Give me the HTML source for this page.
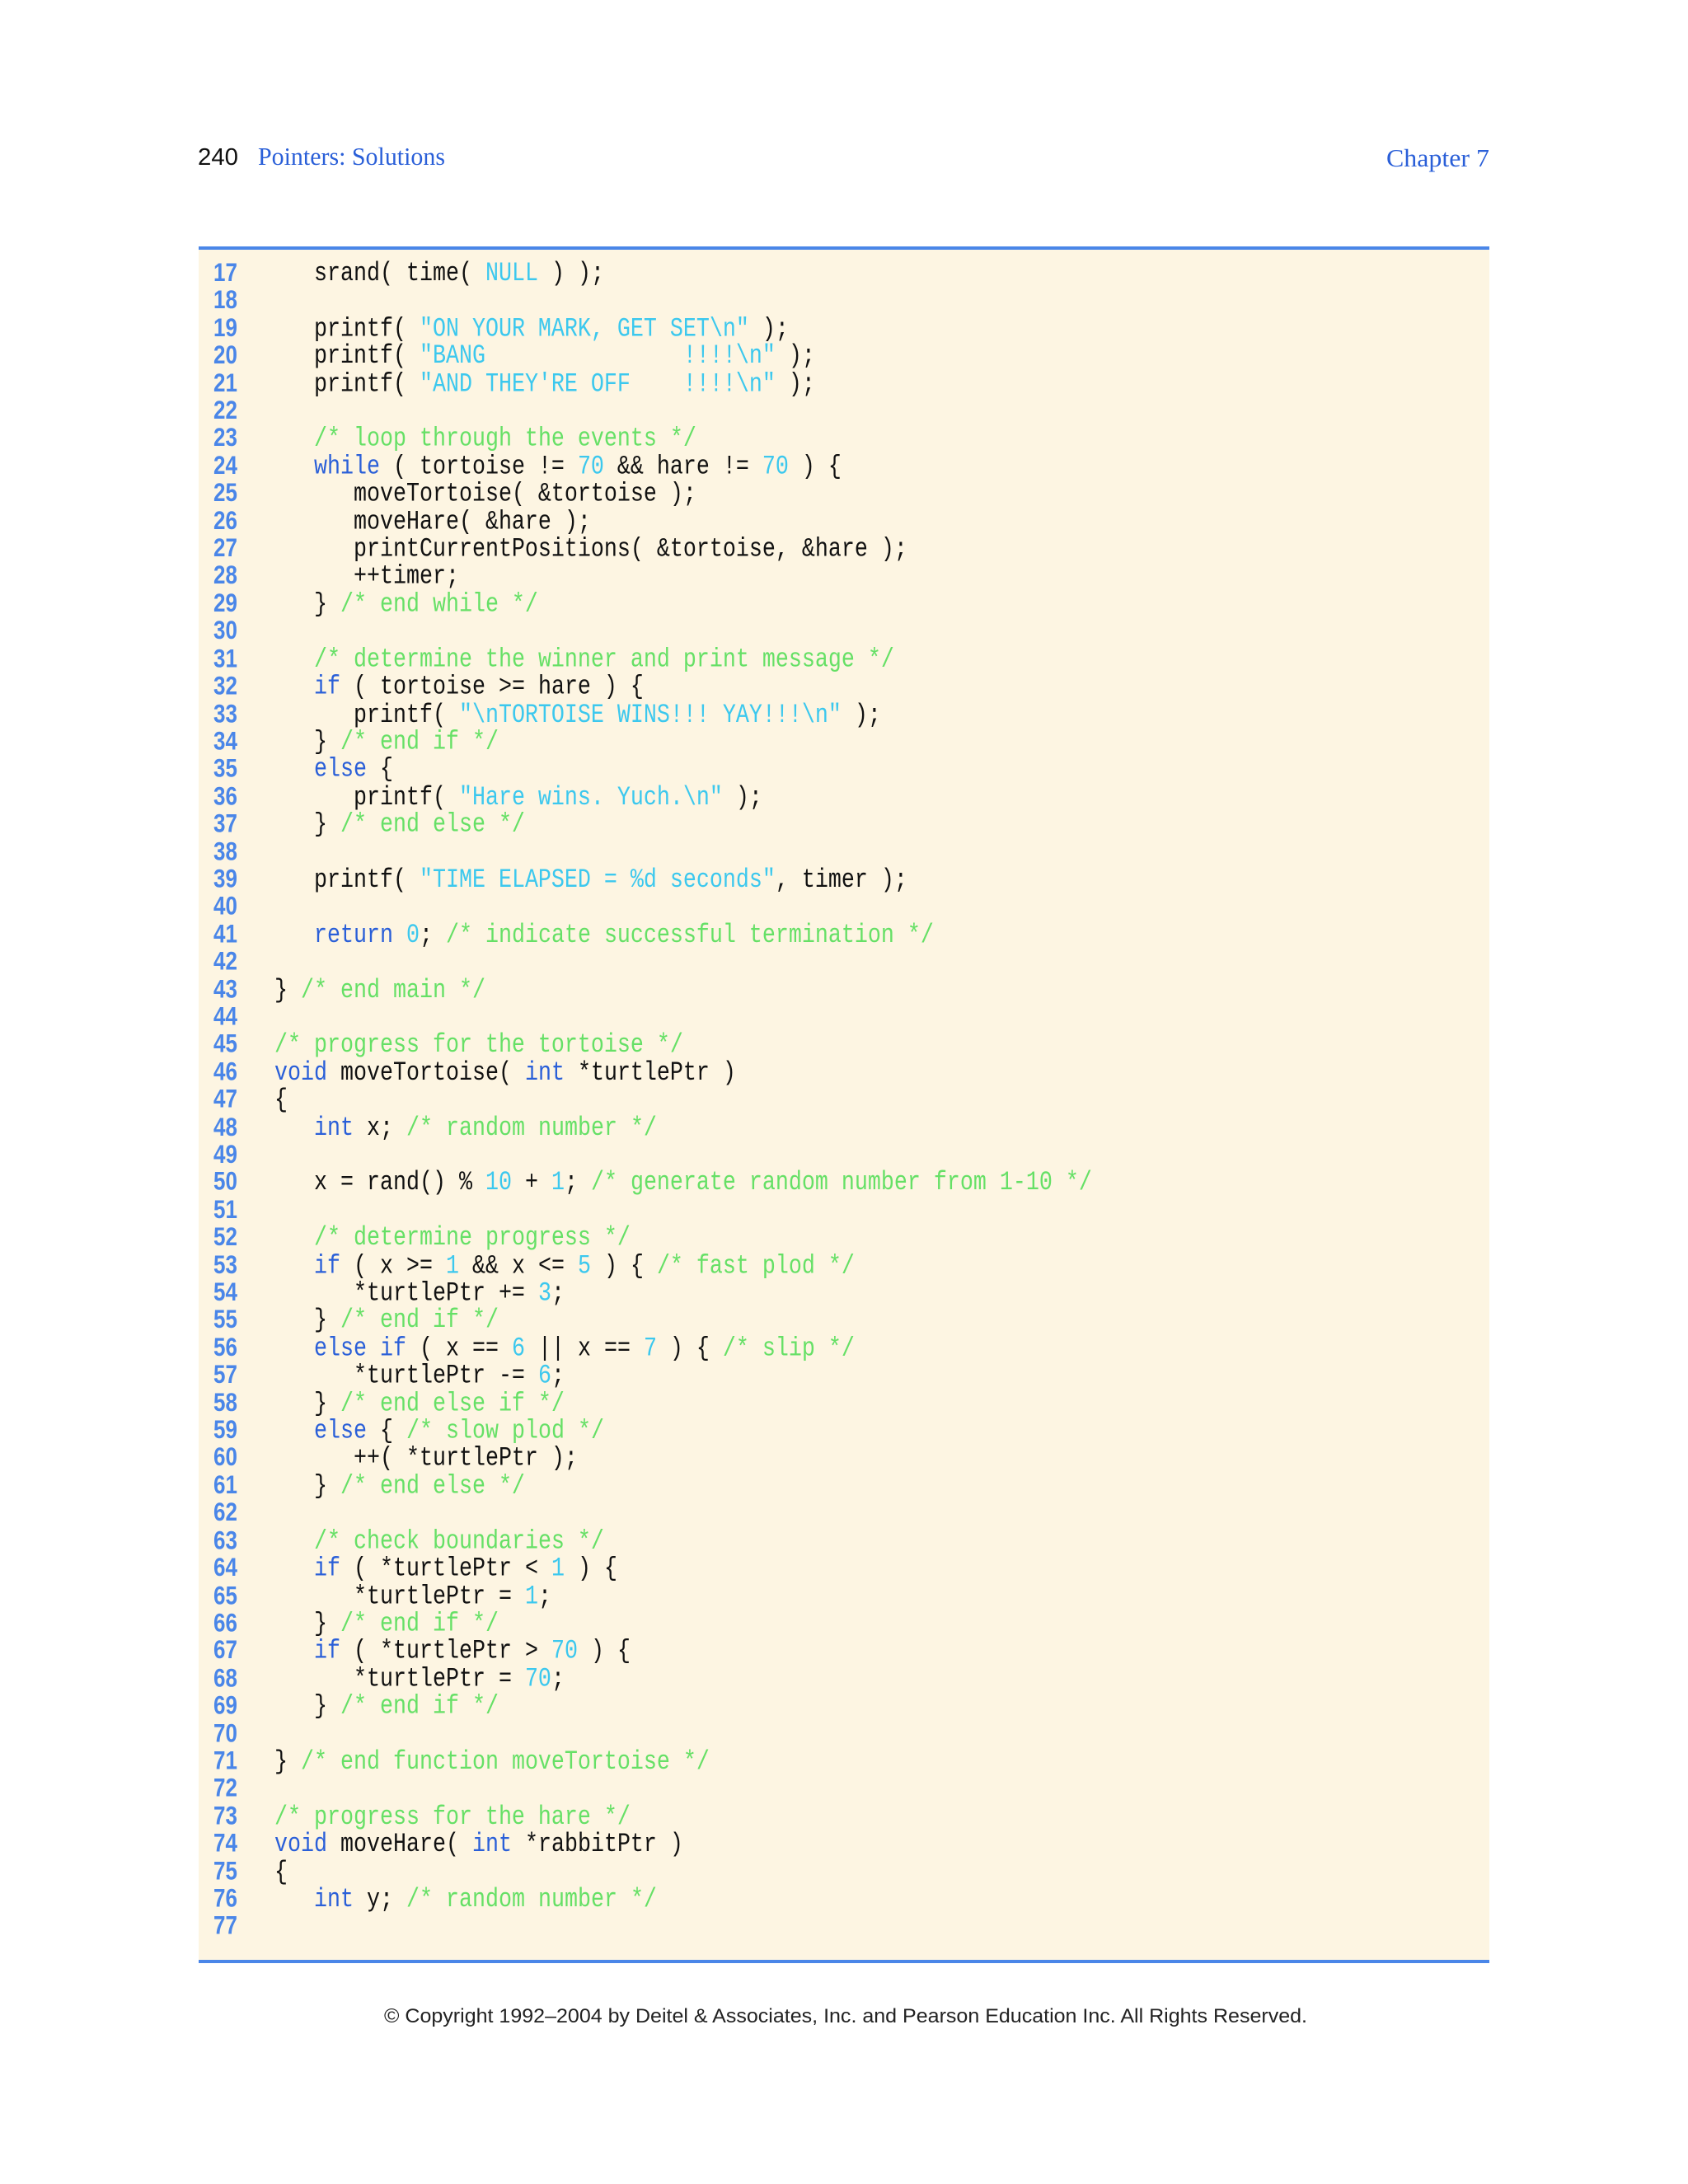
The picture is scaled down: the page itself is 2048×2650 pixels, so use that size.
<!DOCTYPE html>
<html><head><meta charset="utf-8">
<style>
html,body{margin:0;padding:0;background:#fff;}
body{width:2048px;height:2650px;position:relative;overflow:hidden;}
.box{position:absolute;left:241px;top:299px;width:1566px;height:2083px;background:#fdf5e2;border-top:4px solid #4a86e8;border-bottom:4px solid #4a86e8;box-sizing:border-box;}
pre{margin:0;position:absolute;transform:scaleY(1.22);transform-origin:0 0;line-height:27.4px;}
.code{left:333px;top:316.6px;font-family:"Liberation Mono",monospace;font-size:26.67px;color:#111;}
.ln{left:259px;top:314.3px;font-family:"Liberation Sans",sans-serif;font-weight:bold;font-size:26px;color:#4a86e8;}
.k{color:#2a5fd8}.n{color:#3cc8ee}.c{color:#66e066}
svg{position:absolute;left:0;top:0}
</style></head><body>
<div class="box"></div>
<svg width="2048" height="2650">
<text x="240" y="200" font-family="Liberation Sans" font-size="29" fill="#111" textLength="49" lengthAdjust="spacingAndGlyphs">240</text>
<text x="313" y="200" font-family="Liberation Serif" font-size="31" fill="#2a5fd8" textLength="227" lengthAdjust="spacingAndGlyphs">Pointers: Solutions</text>
<text x="1682" y="202" font-family="Liberation Serif" font-size="31" fill="#2a5fd8" textLength="125" lengthAdjust="spacingAndGlyphs">Chapter  7</text>
<text x="466" y="2454" font-family="Liberation Sans" font-size="24" fill="#222" textLength="1120" lengthAdjust="spacingAndGlyphs">© Copyright 1992–2004 by Deitel &amp; Associates, Inc. and Pearson Education Inc. All Rights Reserved.</text>
</svg>
<pre class="ln">17
18
19
20
21
22
23
24
25
26
27
28
29
30
31
32
33
34
35
36
37
38
39
40
41
42
43
44
45
46
47
48
49
50
51
52
53
54
55
56
57
58
59
60
61
62
63
64
65
66
67
68
69
70
71
72
73
74
75
76
77</pre>
<pre class="code">   srand( time( <span class="n">NULL</span> ) );

   printf( <span class="n">"ON YOUR MARK, GET SET\n"</span> );
   printf( <span class="n">"BANG               !!!!\n"</span> );
   printf( <span class="n">"AND THEY'RE OFF    !!!!\n"</span> );

   <span class="c">/* loop through the events */</span>
   <span class="k">while</span> ( tortoise != <span class="n">70</span> &amp;&amp; hare != <span class="n">70</span> ) {
      moveTortoise( &amp;tortoise );
      moveHare( &amp;hare );
      printCurrentPositions( &amp;tortoise, &amp;hare );
      ++timer;
   } <span class="c">/* end while */</span>

   <span class="c">/* determine the winner and print message */</span>
   <span class="k">if</span> ( tortoise &gt;= hare ) {
      printf( <span class="n">"\nTORTOISE WINS!!! YAY!!!\n"</span> );
   } <span class="c">/* end if */</span>
   <span class="k">else</span> {
      printf( <span class="n">"Hare wins. Yuch.\n"</span> );
   } <span class="c">/* end else */</span>

   printf( <span class="n">"TIME ELAPSED = %d seconds"</span>, timer );

   <span class="k">return</span> <span class="n">0</span>; <span class="c">/* indicate successful termination */</span>

} <span class="c">/* end main */</span>

<span class="c">/* progress for the tortoise */</span>
<span class="k">void</span> moveTortoise( <span class="k">int</span> *turtlePtr )
{
   <span class="k">int</span> x; <span class="c">/* random number */</span>

   x = rand() % <span class="n">10</span> + <span class="n">1</span>; <span class="c">/* generate random number from 1-10 */</span>

   <span class="c">/* determine progress */</span>
   <span class="k">if</span> ( x &gt;= <span class="n">1</span> &amp;&amp; x &lt;= <span class="n">5</span> ) { <span class="c">/* fast plod */</span>
      *turtlePtr += <span class="n">3</span>;
   } <span class="c">/* end if */</span>
   <span class="k">else if</span> ( x == <span class="n">6</span> || x == <span class="n">7</span> ) { <span class="c">/* slip */</span>
      *turtlePtr -= <span class="n">6</span>;
   } <span class="c">/* end else if */</span>
   <span class="k">else</span> { <span class="c">/* slow plod */</span>
      ++( *turtlePtr );
   } <span class="c">/* end else */</span>

   <span class="c">/* check boundaries */</span>
   <span class="k">if</span> ( *turtlePtr &lt; <span class="n">1</span> ) {
      *turtlePtr = <span class="n">1</span>;
   } <span class="c">/* end if */</span>
   <span class="k">if</span> ( *turtlePtr &gt; <span class="n">70</span> ) {
      *turtlePtr = <span class="n">70</span>;
   } <span class="c">/* end if */</span>

} <span class="c">/* end function moveTortoise */</span>

<span class="c">/* progress for the hare */</span>
<span class="k">void</span> moveHare( <span class="k">int</span> *rabbitPtr )
{
   <span class="k">int</span> y; <span class="c">/* random number */</span>
</pre>
</body></html>
